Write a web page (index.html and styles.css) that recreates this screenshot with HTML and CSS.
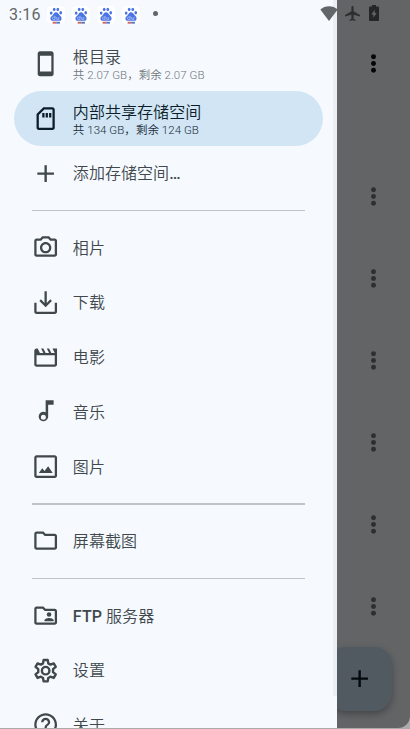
FILE: index.html
```html
<!DOCTYPE html>
<html lang="zh-CN">
<head>
<meta charset="utf-8">
<title>文件</title>
<link rel="stylesheet" href="styles.css">
</head>
<body>
<svg class="defs" width="0" height="0">
  <symbol id="more" viewBox="0 0 24 24"><circle cx="12" cy="6" r="2.2"/><circle cx="12" cy="12" r="2.2"/><circle cx="12" cy="18" r="2.2"/></symbol>
  <symbol id="add" viewBox="0 0 24 24"><path d="M19.300 13.050h-6.250v6.250h-2.100v-6.250H4.700v-2.100h6.250V4.700h2.100v6.250h6.250z"/></symbol>
  <symbol id="paw" viewBox="0 0 16 16">
    <rect width="16" height="16" rx="4" fill="#fff"/>
    <g fill="#4a74e4"><ellipse cx="3.700" cy="6.300" rx="1.200" ry="1.500"/><ellipse cx="6.400" cy="3" rx="1.200" ry="1.500"/><ellipse cx="9.600" cy="3" rx="1.200" ry="1.500"/><ellipse cx="12.200" cy="6" rx="1.200" ry="1.500"/>
    <path d="M8 5.6c1.6 0 2.2 1.6 3.3 2.7 1.3 1.2 2 2.2 1.5 3.600-.5 1.500-2.400 1.200-4.800 1.200s-4.200.3-4.800-1.200c-.5-1.400.3-2.400 1.600-3.500C6 7.300 6.400 5.600 8 5.600z"/></g>
    <path d="M7.200 8.700v3.200H5.800a1 1 0 0 1 0-2h1.400M8.700 9.800v2.100h1.800V9.800" fill="none" stroke="#c5d3f8" stroke-width=".6"/>
    <path d="M5 14h3.200v1.700H5z" fill="#d4645f"/><path d="M8.200 14h3.300v1.700H8.200z" fill="#5478c9"/>
  </symbol>
</svg>
<div class="screen">
  <main class="browser">
    <div class="toolbar"><svg class="more"><use href="#more"/></svg></div>
    <div class="files">
      <div class="file"><svg class="more"><use href="#more"/></svg></div>
      <div class="file"><svg class="more"><use href="#more"/></svg></div>
      <div class="file"><svg class="more"><use href="#more"/></svg></div>
      <div class="file"><svg class="more"><use href="#more"/></svg></div>
      <div class="file"><svg class="more"><use href="#more"/></svg></div>
      <div class="file"><svg class="more"><use href="#more"/></svg></div>
    </div>
    <div class="fab"><svg class="icon"><use href="#add"/></svg></div>
  </main>

  <nav class="drawer">
    <section class="group">
      <div class="item">
        <svg class="icon" viewBox="0 0 24 24"><path d="M17 1.010 7 1c-1.100 0-2 .9-2 2v18c0 1.100.9 2 2 2h10c1.100 0 2-.9 2-2V3c0-1.100-.9-1.990-2-1.990zM17 19H7V5h10v14z"/></svg>
        <div class="text"><span class="title">根目录</span><span class="sub">共 2.07 GB，剩余 2.07 GB</span></div>
      </div>
      <div class="item selected">
        <svg class="icon" viewBox="0 0 24 24"><path d="M18 2h-8L4 8v12c0 1.100.9 2 2 2h12c1.100 0 2-.9 2-2V4c0-1.100-.9-2-2-2zm0 18H6V8.830L10.830 4H18v16zM9 7h2v4H9zm3 0h2v4h-2zm3 0h2v4h-2z"/></svg>
        <div class="text"><span class="title">内部共享存储空间</span><span class="sub">共 134 GB，剩余 124 GB</span></div>
      </div>
      <div class="item"><svg class="icon"><use href="#add"/></svg><span class="title">添加存储空间<b>…</b></span></div>
    </section>
    <hr>
    <section class="group">
      <div class="item"><svg class="icon" viewBox="0 0 24 24"><path d="M20 4h-3.170L15 2H9L7.170 4H4c-1.100 0-2 .9-2 2v12c0 1.100.9 2 2 2h16c1.100 0 2-.9 2-2V6c0-1.100-.9-2-2-2zm0 14H4V6h4.050l1.830-2h4.240l1.830 2H20v12zM12 7c-2.760 0-5 2.240-5 5s2.240 5 5 5 5-2.240 5-5-2.240-5-5-5zm0 8c-1.650 0-3-1.350-3-3s1.350-3 3-3 3 1.350 3 3-1.350 3-3 3z"/></svg><span class="title">相片</span></div>
      <div class="item"><svg class="icon" viewBox="0 0 24 24"><path d="M11 2h2v10.200l3.100-3.100 1.400 1.400L12 16l-5.500-5.500 1.400-1.400 3.100 3.100zM2 12h2v8h16v-8h2v8c0 1.100-.9 2-2 2H4c-1.100 0-2-.9-2-2z"/></svg><span class="title">下载</span></div>
      <div class="item"><svg class="icon" viewBox="0 0 24 24"><path d="m18 4 2 4h-3l-2-4h-2l2 4h-3l-2-4H8l2 4H7L5 4H4c-1.100 0-1.990.9-1.990 2L2 18c0 1.100.9 2 2 2h16c1.100 0 2-.9 2-2V4h-4zm2 14H4V10h16v8z"/></svg><span class="title">电影</span></div>
      <div class="item"><svg class="icon" viewBox="0 0 24 24"><path d="M12 2v10.550A4.200 4.200 0 1 0 14.200 17V6H19V2h-7zm-2 17.200a2.200 2.200 0 1 1 0-4.400 2.200 2.200 0 0 1 0 4.400z"/></svg><span class="title">音乐</span></div>
      <div class="item"><svg class="icon" viewBox="0 0 24 24"><path fill-rule="evenodd" d="M4 2h16c1.100 0 2 .9 2 2v16c0 1.100-.9 2-2 2H4c-1.100 0-2-.9-2-2V4c0-1.100.9-2 2-2zm0 2v16h16V4zm2 13.500 3-4 2 2.400 3.200-4.200 4 5.800z"/></svg><span class="title">图片</span></div>
    </section>
    <hr>
    <section class="group">
      <div class="item"><svg class="icon" viewBox="0 0 24 24"><path d="m9.170 6 2 2H20v10H4V6h5.170M10 4H4c-1.100 0-1.990.9-1.990 2L2 18c0 1.100.9 2 2 2h16c1.100 0 2-.9 2-2V8c0-1.100-.9-2-2-2h-8l-2-2z"/></svg><span class="title">屏幕截图</span></div>
    </section>
    <hr>
    <section class="group">
      <div class="item"><svg class="icon" viewBox="0 0 24 24"><path d="m9.170 6 2 2H20v10H4V6h5.170M10 4H4c-1.100 0-1.990.9-1.990 2L2 18c0 1.100.9 2 2 2h16c1.100 0 2-.9 2-2V8c0-1.100-.9-2-2-2h-8l-2-2z"/><circle cx="15" cy="11" r="2"/><path d="M11 17v-1c0-1.330 2.670-2 4-2s4 .67 4 2v1z"/></svg><span class="title"><b>FTP</b> 服务器</span></div>
      <div class="item"><svg class="icon" viewBox="0 0 24 24"><path d="M10.200 1.600h3.600l.5 3 1.900 1.100 2.900-1.100 1.800 3.100-2.400 2v2.600l2.400 2-1.800 3.100-2.900-1.100-1.900 1.100-.5 3h-3.600l-.5-3-1.900-1.100-2.900 1.100-1.800-3.100 2.400-2V9.700l-2.400-2 1.800-3.100 2.900 1.100 1.900-1.100z" transform="translate(0 1)" fill="none" stroke="currentColor" stroke-width="2.100" stroke-linejoin="round"/><circle cx="12" cy="12" r="3.300" fill="none" stroke="currentColor" stroke-width="2.100"/></svg><span class="title">设置</span></div>
      <div class="item"><svg class="icon" viewBox="0 0 24 24"><path d="M11 18h2v-2h-2v2zm1-16C6.480 2 2 6.480 2 12s4.480 10 10 10 10-4.480 10-10S17.520 2 12 2zm0 18c-4.410 0-8-3.590-8-8s3.590-8 8-8 8 3.590 8 8-3.590 8-8 8zm0-14c-2.210 0-4 1.790-4 4h2c0-1.100.9-2 2-2s2 .9 2 2c0 2-3 1.750-3 5h2c0-2.250 3-2.500 3-5 0-2.210-1.790-4-4-4z"/></svg><span class="title">关于</span></div>
    </section>
    <div class="scrollbar"></div>
  </nav>

  <header class="status">
    <span class="clock">3:16</span>
    <div class="notices">
      <svg><use href="#paw"/></svg><svg><use href="#paw"/></svg><svg><use href="#paw"/></svg><svg><use href="#paw"/></svg>
    </div>
    <span class="dot"></span>
    <div class="system">
      <svg class="wifi" viewBox="0 0 18 15"><path d="M9 15 .3 3.600C5-1 13-1 17.700 3.600z"/></svg>
      <svg class="plane" viewBox="2 2 20 20"><path d="M22 16v-2l-8.500-5V3.500C13.500 2.670 12.830 2 12 2s-1.500.67-1.500 1.500V9L2 14v2l8.500-2.500V19L8 20.500V22l4-1 4 1v-1.500L13.500 19v-5.500z"/></svg>
      <svg class="battery" viewBox="7 2 10 20" preserveAspectRatio="none"><path d="M15.670 4H14V2h-4v2H8.330C7.600 4 7 4.600 7 5.330v15.330C7 21.400 7.600 22 8.330 22h7.330c.74 0 1.340-.6 1.340-1.330V5.330C17 4.600 16.400 4 15.670 4zM11.300 18v-4H9.300l3.400-6v4h2z"/></svg>
    </div>
  </header>
</div>
</body>
</html>
```
FILE: styles.css
```css
* { box-sizing: border-box; }
body {
  margin: 0;
  height: 729px;
  overflow: hidden;
  background: #aaabac;
  font-family: Roboto, "Noto Sans CJK SC", sans-serif;
  color: #40484c;
}
.defs { position: absolute; }
svg { display: block; flex: none; fill: currentColor; }
.screen {
  position: relative;
  width: 410px;
  height: 728px;
  overflow: hidden;
  border-radius: 0 0 12px 0;
  background: #636466;
}
.icon { width: 27.300px; height: 27.300px; }

.browser { padding-top: 31.500px; }
.toolbar, .file {
  display: flex;
  align-items: center;
  justify-content: flex-end;
  padding-right: 23px;
}
.toolbar { height: 64px; color: #030405; }
.files { padding-top: 59.500px; }
.file { height: 82px; color: #2c2e30; }
.more { width: 27px; height: 27px; }
.fab {
  position: absolute;
  right: 18px;
  bottom: 17px;
  width: 64px;
  height: 64px;
  display: flex;
  align-items: center;
  justify-content: center;
  border-radius: 18px;
  background: #525a61;
  color: #030a0e;
  box-shadow: 0 3px 7px rgba(0, 0, 0, .3);
}

.drawer {
  position: absolute;
  inset: 0 auto 0 0;
  width: 337px;
  padding: 36.500px 13.700px 0;
  overflow: hidden;
  background: #f6faff;
}
.item {
  display: flex;
  align-items: center;
  gap: 13.700px;
  width: 309.700px;
  height: 54.700px;
  padding-left: 18.200px;
  border-radius: 28px;
}
.selected { background: #d1e5f4; color: #0b1d29; }
.text { display: flex; flex-direction: column; padding-top: 2px; }
.title {
  padding-top: 2px;
  font-size: 16px;
  font-weight: 350;
  line-height: 20px;
  letter-spacing: .05px;
  white-space: nowrap;
}
.text .title { padding-top: 1px; }
.title b { font-weight: 500; letter-spacing: .1px; }
.sub {
  margin-top: -1px;
  font-size: 11.500px;
  font-weight: 350;
  line-height: 16px;
  letter-spacing: .04px;
  color: #70767a;
  white-space: nowrap;
}
.selected .sub { color: #1a2c38; }
hr {
  height: 1.500px;
  margin: 9.200px 18px;
  border: 0;
  background: #bec3c7;
}
.scrollbar {
  position: absolute;
  top: 0;
  right: 0;
  width: 4.500px;
  height: 696px;
  background: #ebeff4;
}

.status {
  position: absolute;
  inset: 0 0 auto 0;
  height: 28px;
  display: flex;
  align-items: center;
  padding: 0 31px 0 9px;
  color: #636668;
}
.clock { width: 38px; font-size: 16px; font-weight: 450; letter-spacing: .2px; }
.notices { display: flex; gap: 7px; padding-top: 1px; }
.notices svg { width: 18px; height: 18px; }
.dot {
  width: 5px;
  height: 5px;
  margin: -1px 0 0 13px;
  border-radius: 50%;
  background: #636668;
}
.system { display: flex; align-items: center; margin: -2px 0 0 auto; }
.wifi { width: 18px; height: 15px; margin-right: 7px; }
.plane { width: 15px; height: 15px; margin-right: 9px; color: #2d2f30; }
.battery { width: 10px; height: 16px; color: #242627; }
```
